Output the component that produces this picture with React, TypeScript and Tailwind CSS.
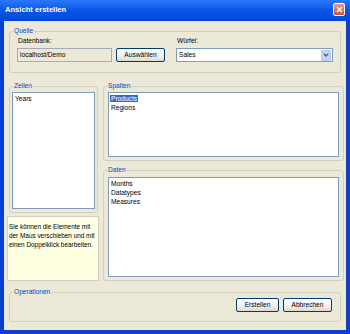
import React from 'react'

const font = "font-['Liberation_Sans','Arial',sans-serif]"

// XP style group box: the caption sits on the top border line
const Group = ({ label, className, inner, children }: { label: string; className?: string; inner?: string; children?: React.ReactNode }) => (
  <div className={`border border-[#d0d0bf] rounded-[3px] flex flex-col ${className ?? ''}`}>
    <span className="self-start ml-[3px] px-[1px] -mt-[7px] -mb-[5px] h-[12px] leading-[12px] bg-[#ece9d8] text-[#0046d5]">{label}</span>
    <div className={`flex flex-col flex-1 ${inner ?? ''}`}>{children}</div>
  </div>
)

const ListBox = ({ items, selected, className }: { items: string[]; selected?: number; className?: string }) => (
  <div className={`bg-white border border-[#7f9db9] pl-[1px] pt-[1px] ${className ?? ''}`}>
    {items.map((it, i) => (
      <div key={it} className="leading-[9px] h-[9px]">
        <span className={i === selected ? 'bg-[#316ac5] text-white px-[1px]' : 'px-[1px]'}>{it}</span>
      </div>
    ))}
  </div>
)

const XpButton = ({ label, className }: { label: string; className?: string }) => (
  <button className={`h-[14px] border border-[#003c74] rounded-[2px] bg-gradient-to-b from-white via-[#f4f3ee] to-[#dcdad0] text-black leading-[12px] ${className ?? ''}`}>
    {label}
  </button>
)

const App = () => {
  return (
    <main className={`w-[350px] h-[334px] bg-[#0a3fd0] flex flex-col text-[6.6px] text-black ${font}`}>
      {/* title bar */}
      <div className="h-[21px] flex items-center justify-between pl-[5px] pr-[5px] bg-gradient-to-b from-[#2a78f8] via-[#0656e8] to-[#0048d8]">
        <span className="text-white font-bold text-[7.6px] -mt-[2px]">Ansicht erstellen</span>
        <div className="w-[12px] h-[13px] -mt-[2px] rounded-[2px] border border-white bg-gradient-to-b from-[#ec9a7c] to-[#d2532e] flex items-center justify-center">
          <svg width="7" height="7" viewBox="0 0 7 7">
            <path d="M1 1 L6 6 M6 1 L1 6" stroke="white" strokeWidth="1.4" />
          </svg>
        </div>
      </div>

      {/* client area */}
      <div className="flex-1 mx-[4px] mb-[4px] bg-[#ece9d8] flex flex-col">
        <Group label="Quelle" className="mt-[10px] ml-[5px] w-[332px] h-[42px]" inner="px-[7px] pt-[4px]">
          <div className="flex">
            <div className="flex flex-col">
              <span className="leading-[9px] h-[9px] ml-[1px]">Datenbank:</span>
              <div className="flex gap-[4px] mt-[3px]">
                <div className="w-[95px] h-[14px] border border-[#a5acb5] bg-[#ece9d8] pl-[2px] leading-[12px]">localhost/Demo</div>
                <XpButton label="Auswählen" className="w-[49px]" />
              </div>
            </div>
            <div className="flex flex-col ml-[11px]">
              <span className="leading-[9px] h-[9px] ml-[1px]">Würfel:</span>
              <div className="mt-[3px] w-[157px] h-[14px] border border-[#7f9db9] bg-white flex items-center justify-between pl-[2px] pr-[1px]">
                <span className="leading-[12px]">Sales</span>
                <div className="w-[10px] h-[11px] rounded-[1px] bg-[#c1d3fb] border border-[#b9c9ef] flex items-center justify-center">
                  <svg width="6" height="4" viewBox="0 0 6 4">
                    <path d="M0.8 0.8 L3 3 L5.2 0.8" stroke="#4d6185" strokeWidth="1.3" fill="none" />
                  </svg>
                </div>
              </div>
            </div>
          </div>
        </Group>

        <div className="flex mt-[13px] ml-[3px]">
          <div className="flex flex-col w-[92px]">
            <Group label="Zeilen" className="ml-[2px] w-[89px] h-[127px]" inner="px-[2px] pt-[5px] pb-[3px]">
              <ListBox items={['Years']} className="flex-1" />
            </Group>
            <div className="mt-[3px] h-[65px] border border-[#d0d0bf] bg-[#ffffe1] px-[1px] pt-[5px] leading-[9px] text-[6.4px]">
              Sie können die Elemente mit der Maus verschieben und mit einen Doppelklick bearbeiten.
            </div>
          </div>
          <div className="flex flex-col ml-[4px] w-[241px]">
            <Group label="Spalten" className="h-[75px]" inner="px-[4px] pt-[5px] pb-[3px]">
              <ListBox items={['Products', 'Regions']} selected={0} className="flex-1" />
            </Group>
            <Group label="Daten" className="h-[111px] mt-[9px]" inner="px-[4px] pt-[6px] pb-[3px]">
              <ListBox items={['Months', 'Datatypes', 'Measures']} className="flex-1" />
            </Group>
          </div>
        </div>

        <Group label="Operationen" className="mt-[11px] ml-[5px] w-[332px] h-[30px]" inner="px-[8px] pt-[5px]">
          <div className="flex justify-end gap-[4px]">
            <XpButton label="Erstellen" className="w-[43px]" />
            <XpButton label="Abbrechen" className="w-[49px]" />
          </div>
        </Group>
      </div>
    </main>
  )
}

export default App
